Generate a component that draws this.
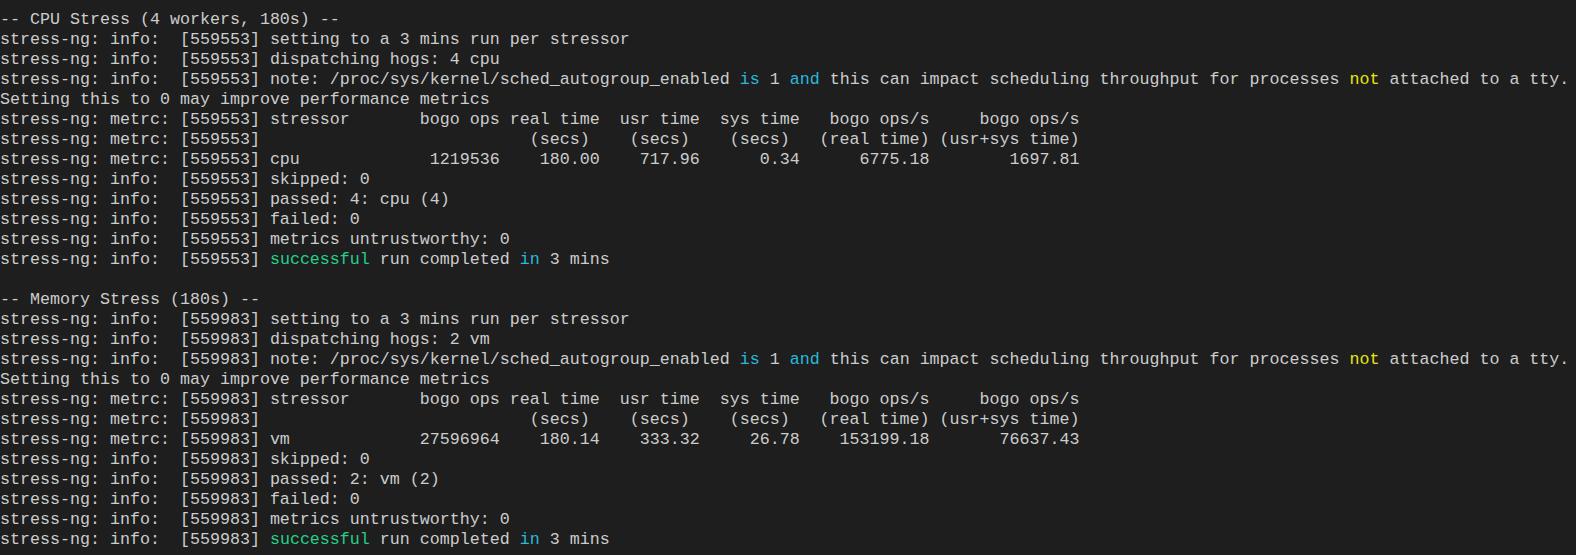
type Seg = { t: string; c?: "blue" | "green" | "yellow" };
type Line = Seg[];

const colorClass = {
  blue: "text-[#29b8db]",
  green: "text-[#23d18b]",
  yellow: "text-[#e5e510]",
};

function plain(t: string): Line {
  return [{ t }];
}

function runBlock(pid: string, title: string, hogs: string, stressor: string, row: string, passed: string): Line[] {
  const info = `stress-ng: info:  [${pid}] `;
  const metrc = `stress-ng: metrc: [${pid}] `;
  return [
    plain(title),
    plain(info + "setting to a 3 mins run per stressor"),
    plain(info + "dispatching hogs: " + hogs),
    [
      { t: info + "note: /proc/sys/kernel/sched_autogroup_enabled " },
      { t: "is", c: "blue" },
      { t: " 1 " },
      { t: "and", c: "blue" },
      { t: " this can impact scheduling throughput for processes " },
      { t: "not", c: "yellow" },
      { t: " attached to a tty." },
    ],
    plain("Setting this to 0 may improve performance metrics"),
    plain(metrc + "stressor       bogo ops real time  usr time  sys time   bogo ops/s     bogo ops/s"),
    plain(metrc + "                          (secs)    (secs)    (secs)   (real time) (usr+sys time)"),
    plain(metrc + stressor + row),
    plain(info + "skipped: 0"),
    plain(info + "passed: " + passed),
    plain(info + "failed: 0"),
    plain(info + "metrics untrustworthy: 0"),
    [
      { t: info },
      { t: "successful", c: "green" },
      { t: " run completed " },
      { t: "in", c: "blue" },
      { t: " 3 mins" },
    ],
  ];
}

const lines: Line[] = [
  ...runBlock(
    "559553",
    "-- CPU Stress (4 workers, 180s) --",
    "4 cpu",
    "cpu",
    "             1219536    180.00    717.96      0.34      6775.18        1697.81",
    "4: cpu (4)"
  ),
  plain(""),
  ...runBlock(
    "559983",
    "-- Memory Stress (180s) --",
    "2 vm",
    "vm",
    "             27596964    180.14    333.32     26.78    153199.18       76637.43",
    "2: vm (2)"
  ),
];

export default function App() {
  return (
    <div className="w-[1576px] h-[555px] overflow-hidden bg-[#1e1e1e] pt-[10px] text-[#cccccc] font-['Liberation_Mono',monospace] text-[16.667px] leading-[20px]">
      {lines.map((line, i) => (
        <div key={i} className="h-[20px] whitespace-pre">
          {line.map((s, j) => (
            <span key={j} className={s.c ? colorClass[s.c] : undefined}>
              {s.t}
            </span>
          ))}
        </div>
      ))}
    </div>
  );
}
